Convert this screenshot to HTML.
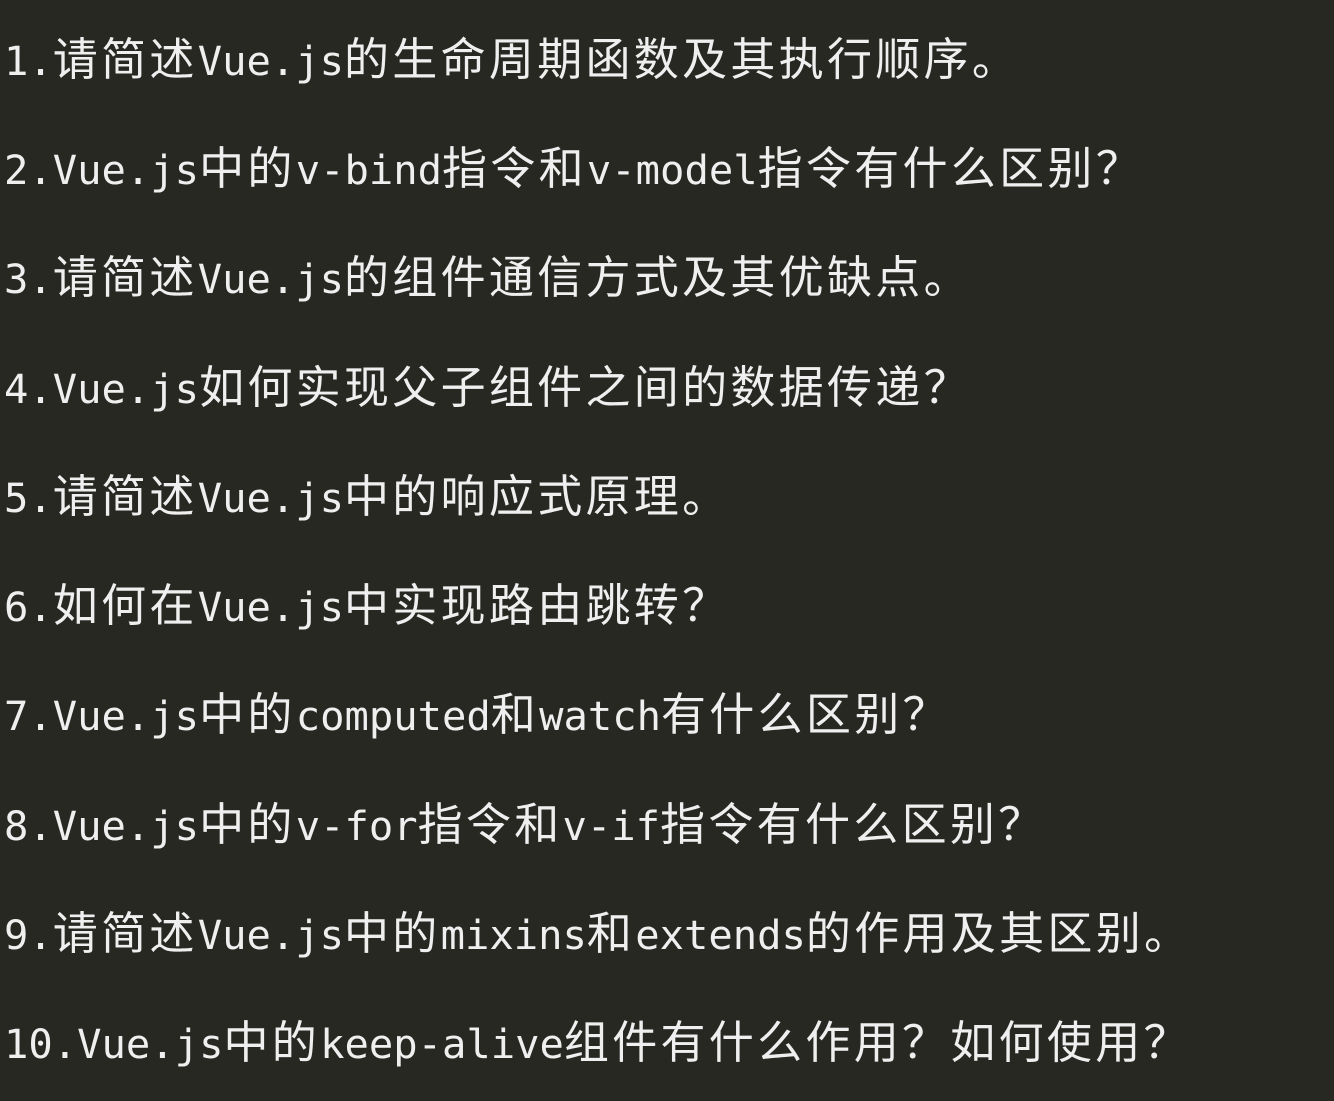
<!DOCTYPE html>
<html><head><meta charset="utf-8">
<style>
html,body{margin:0;padding:0;background:#272822;width:1334px;height:1101px;overflow:hidden}
.l{position:absolute;left:4px;white-space:nowrap;color:#efefef;font-family:"Liberation Sans","Noto Sans CJK SC",sans-serif;font-size:45px;letter-spacing:3.3px;line-height:60px;height:60px}
.a{font-family:"DejaVu Sans Mono","Liberation Mono",monospace;font-size:40.5px;letter-spacing:0}
</style></head><body>
<div class="l" style="top:30px">1.请简述Vue.js的生命周期函数及其执行顺序。</div>
<div class="l" style="top:139px">2.Vue.js中的v-bind指令和v-model指令有什么区别？</div>
<div class="l" style="top:248px">3.请简述Vue.js的组件通信方式及其优缺点。</div>
<div class="l" style="top:358px">4.Vue.js如何实现父子组件之间的数据传递？</div>
<div class="l" style="top:467px">5.请简述Vue.js中的响应式原理。</div>
<div class="l" style="top:576px">6.如何在Vue.js中实现路由跳转？</div>
<div class="l" style="top:685px">7.Vue.js中的computed和watch有什么区别？</div>
<div class="l" style="top:795px">8.Vue.js中的v-for指令和v-if指令有什么区别？</div>
<div class="l" style="top:904px">9.请简述Vue.js中的mixins和extends的作用及其区别。</div>
<div class="l" style="top:1013px">10.Vue.js中的keep-alive组件有什么作用？如何使用？</div>
<script>
document.querySelectorAll('.l').forEach(function(d){
  d.innerHTML=d.textContent.replace(/[\x20-\x7e]+/g,function(m){return '<span class="a">'+m+'</span>';});
});
</script>
</body></html>
